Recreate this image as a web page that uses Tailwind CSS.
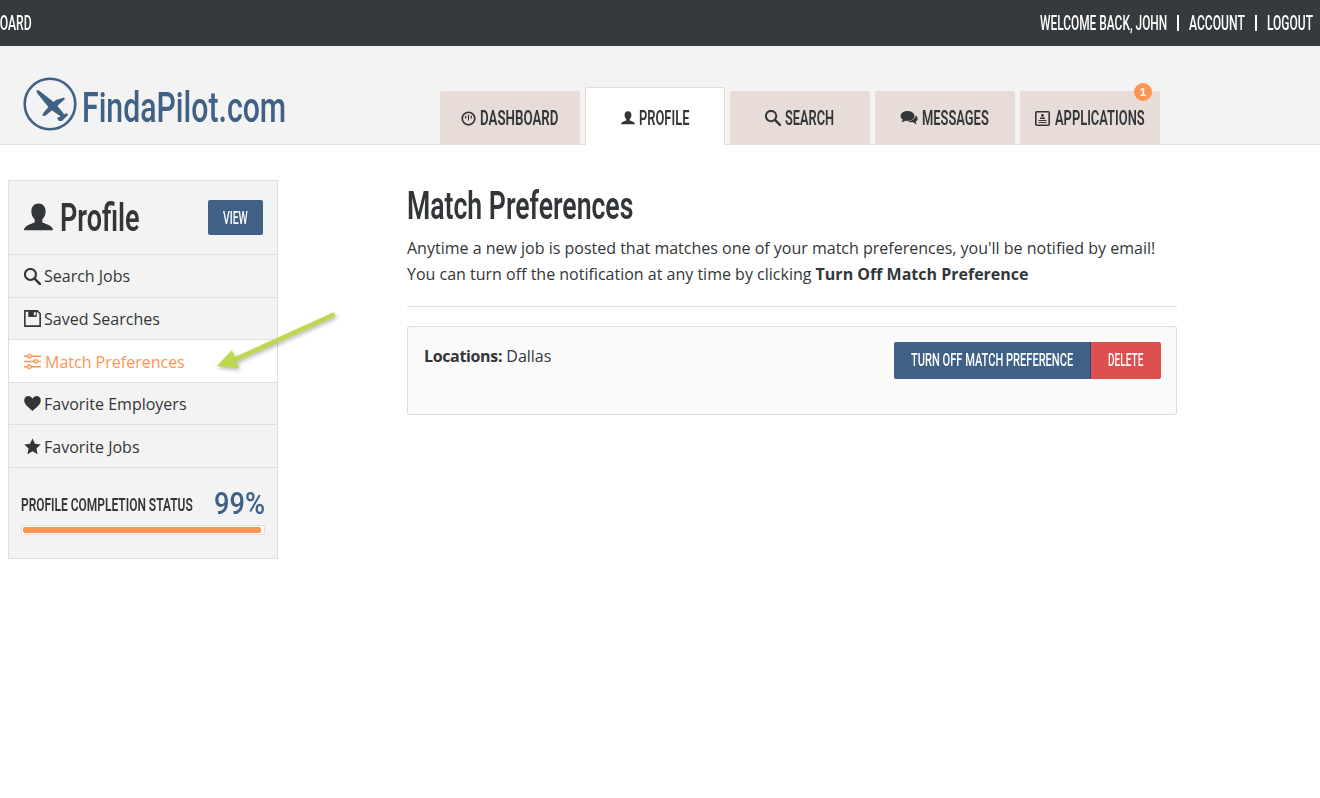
<!DOCTYPE html>
<html lang="en">
<head>
  <meta charset="UTF-8" />
  <title>FindaPilot.com - Match Preferences</title>
  <script src="https://cdn.jsdelivr.net/npm/@tailwindcss/browser@4"></script>
</head>
<body class="relative bg-white min-h-screen overflow-hidden font-['Open_Sans',sans-serif] text-[#333639]">
  <!-- top bar -->
  <div class="h-[46px] bg-[#363a3d] flex items-center justify-between pr-[7px] text-white text-[20px] leading-[24px] font-medium font-['Roboto',sans-serif]">
    <a class="ml-[-40px] w-[71px] inline-block whitespace-nowrap origin-left scale-x-[.61]">DASHBOARD</a>
    <div class="flex items-center">
      <a class="w-[127px] inline-block whitespace-nowrap origin-left scale-x-[.595]">WELCOME BACK, JOHN</a>
      <span class="w-[2px] h-[16px] bg-white mx-[10px]"></span>
      <a class="w-[56px] inline-block whitespace-nowrap origin-left scale-x-[.605]">ACCOUNT</a>
      <span class="w-[2px] h-[16px] bg-white mx-[10px]"></span>
      <a class="w-[46px] inline-block whitespace-nowrap origin-left scale-x-[.6]">LOGOUT</a>
    </div>
  </div>

  <!-- logo + tabs -->
  <div class="h-[99px] bg-[#f3f3f3] border-b border-[#e8dcd6] flex items-end">
    <div class="w-[440px] h-full flex items-start pt-[31px] pl-[23px]">
      <svg class="w-[55px] h-[55px] shrink-0" viewBox="0 0 55 55">
        <circle cx="27" cy="27" r="25.300" fill="none" stroke="#3f6186" stroke-width="2.600"/>
        <path fill="#3f6186" d="M13.500 13L16 13.500L32 26L41 37L40 40L37 39L27 32L14 16z"/>
        <path fill="#3f6186" d="M41 20.500L42 22L32 31L22 39L19 38.500L21 35L28 27L33 23z"/>
        <path fill="#3f6186" d="M34 41L44 36L45 38L43 40L39 44L36 44z"/>
      </svg>
      <span class="ml-[4px] mt-[8px] w-[203px] inline-block whitespace-nowrap origin-left scale-x-[.72] text-[#3f6186] text-[42px] leading-[46px] font-medium font-['Roboto',sans-serif]">FindaPilot.com</span>
    </div>
    <nav class="flex gap-[5px] items-end text-[20px] leading-[24px] font-semibold font-['Roboto',sans-serif]">
      <a class="w-[140px] h-[53px] pt-[1px] bg-[#e7dcd7] rounded-t-[2px] flex items-center justify-center gap-[4px]">
        <svg class="w-[15px] h-[15px]" viewBox="0 0 16 16"><circle cx="8" cy="8" r="6.700" fill="none" stroke="#333639" stroke-width="1.800"/><path fill="#333639" d="M7.300 4h1.400l-.2 6h-1zM4.300 5h1.200l.4 3H4.500zM10.500 5h1.200l-.2 3h-1.400z"/></svg>
        <span class="w-[79px] inline-block whitespace-nowrap origin-left scale-x-[.665]">DASHBOARD</span>
      </a>
      <a class="w-[140px] h-[58px] mb-[-1px] pt-[3px] bg-white border border-b-0 border-[#e8dcd6] rounded-t-[2px] flex items-center justify-center gap-[4px]">
        <svg class="w-[14px] h-[14px]" viewBox="1 1 13 12.500"><path fill="#333639" d="M7.500 1c2 0 3.200 1.500 3.200 3.500 0 1.500-.6 2.800-1.500 3.700v1.300c1.800.7 4.800 1.500 4.800 3.500H1c0-2 3-2.800 4.800-3.500V8.200C4.900 7.300 4.300 6 4.300 4.500 4.300 2.500 5.500 1 7.500 1z"/></svg>
        <span class="w-[50px] inline-block whitespace-nowrap origin-left scale-x-[.645]">PROFILE</span>
      </a>
      <a class="w-[140px] h-[53px] pt-[1px] bg-[#e7dcd7] rounded-t-[2px] flex items-center justify-center gap-[4px]">
        <svg class="w-[16px] h-[16px]" viewBox="1 1 14.500 14.500"><circle cx="6.500" cy="6.500" r="4.700" fill="none" stroke="#333639" stroke-width="1.800"/><path stroke="#333639" stroke-width="2.200" stroke-linecap="round" d="M10 10l4.500 4.500"/></svg>
        <span class="w-[50px] inline-block whitespace-nowrap origin-left scale-x-[.64]">SEARCH</span>
      </a>
      <a class="w-[140px] h-[53px] pt-[1px] bg-[#e7dcd7] rounded-t-[2px] flex items-center justify-center gap-[4px]">
        <svg class="w-[18px] h-[16px]" viewBox="0 0 18 16"><ellipse cx="7.500" cy="6" rx="7" ry="5" fill="#333639"/><path fill="#333639" d="M3 9l-1.500 3.500L6 10.500zM15.500 5.500c1.800 1 2.500 2.500 2 4-.3 1-1 1.700-1.800 2.200l.8 2.800-3.500-2.300c-2 .3-4-.2-5-1.200 3.500 0 7.500-2 7.500-5.500z"/></svg>
        <span class="w-[68px] inline-block whitespace-nowrap origin-left scale-x-[.645]">MESSAGES</span>
      </a>
      <a class="relative w-[140px] h-[53px] pt-[1px] bg-[#e7dcd7] rounded-t-[2px] flex items-center justify-center gap-[5px]">
        <svg class="w-[15px] h-[15px] shrink-0" viewBox="0 0 15 15"><rect x=".8" y=".8" width="13.400" height="13.400" rx="1" fill="none" stroke="#333639" stroke-width="1.600"/><circle cx="7.500" cy="4.500" r="1.400" fill="#333639"/><path fill="#333639" d="M5 6.500h5v1.500H5zM3.500 9h8v1h-8zM3.500 11h8v1h-8z"/></svg>
        <span class="w-[90px] inline-block whitespace-nowrap origin-left scale-x-[.645]">APPLICATIONS</span>
        <span class="absolute top-[-8px] right-[8px] w-[18px] h-[18px] rounded-full bg-[#fd9555] text-white text-[11px] font-bold leading-[18px] text-center font-['Liberation_Sans',sans-serif]">1</span>
      </a>
    </nav>
  </div>

  <!-- page body -->
  <div class="flex items-start pl-[8px] pt-[35px]">
    <aside class="w-[270px] shrink-0 bg-[#f3f3f3] border border-[#e8dcd6] h-[379px]">
      <div class="h-[73px] flex items-center justify-between pl-[15px] pr-[14px]">
        <h2 class="flex items-center gap-[7px] text-[38px] leading-[44px] font-semibold font-['Roboto',sans-serif]">
          <svg class="w-[29px] h-[29px]" viewBox="1 1 13 12.500"><path fill="#333639" d="M7.500 1c2 0 3.200 1.500 3.200 3.500 0 1.500-.6 2.800-1.500 3.700v1.300c1.800.7 4.800 1.500 4.800 3.500H1c0-2 3-2.800 4.800-3.500V8.200C4.900 7.300 4.300 6 4.300 4.500 4.300 2.500 5.500 1 7.500 1z"/></svg>
          <span class="w-[79px] inline-block whitespace-nowrap origin-left scale-x-[.71]">Profile</span>
        </h2>
        <a class="w-[55px] h-[35px] bg-[#3f6186] rounded-[2px] text-white text-[18px] leading-[22px] font-medium flex items-center justify-center font-['Roboto',sans-serif]"><span class="w-[26px] inline-block whitespace-nowrap origin-left scale-x-[.58]">VIEW</span></a>
      </div>
      <ul class="text-[16px] leading-[22px]">
        <li class="h-[43px] border-t border-[#e8dcd6] flex items-center gap-[3px] pl-[15px]">
          <svg class="w-[17px] h-[17px]" viewBox="1 1 14.500 14.500"><circle cx="6.500" cy="6.500" r="4.700" fill="none" stroke="#333639" stroke-width="1.800"/><path stroke="#333639" stroke-width="2.200" stroke-linecap="round" d="M10 10l4.500 4.500"/></svg>
          Search Jobs
        </li>
        <li class="h-[42px] border-t border-[#e8dcd6] flex items-center gap-[3px] pl-[15px]">
          <svg class="w-[17px] h-[17px]" viewBox="0 0 16 16"><path fill="none" stroke="#333639" stroke-width="1.500" d="M.8.800h11.700l2.700 2.700v11.700H.8z"/><path fill="#333639" d="M4 1h8v5.500H4z"/><path fill="#f3f3f3" d="M9.300 2h1.700v3H9.300z"/></svg>
          Saved Searches
        </li>
        <li class="h-[43px] pt-[1px] border-t border-[#e8dcd6] bg-white text-[#fd9555] flex items-center gap-[4px] pl-[15px]">
          <svg class="w-[17px] h-[17px]" viewBox="0 0 16 16" fill="none" stroke="#fd9555" stroke-width="1.300"><path d="M0 3h16M0 8h16M0 13h16"/><circle cx="5" cy="3" r="1.700" fill="#fff"/><circle cx="11" cy="8" r="1.700" fill="#fff"/><circle cx="5" cy="13" r="1.700" fill="#fff"/></svg>
          Match Preferences
        </li>
        <li class="h-[42px] border-t border-[#e8dcd6] flex items-center gap-[3px] pl-[15px]">
          <svg class="w-[17px] h-[17px]" viewBox="0 0 16 16"><path fill="#333639" d="M8 15C4 11.500.2 9 .2 5 .2 2.500 2 1 4 1c1.800 0 3.200 1 4 2.500C8.800 2 10.200 1 12 1c2 0 3.800 1.500 3.800 4 0 4-3.800 6.500-7.800 10z"/></svg>
          Favorite Employers
        </li>
        <li class="h-[44px] pt-[1px] border-y border-[#e8dcd6] flex items-center gap-[3px] pl-[15px]">
          <svg class="w-[17px] h-[17px]" viewBox="0 0 16 16"><path fill="#333639" d="M8 .5l2.300 5 5.400.6-4 3.700 1.100 5.400L8 12.500l-4.800 2.700 1.100-5.400-4-3.700 5.400-.6z"/></svg>
          Favorite Jobs
        </li>
      </ul>
      <div class="px-[12px] pt-[15px]">
        <div class="flex items-center justify-between h-[42px]">
          <span class="mt-[2px] w-[173px] inline-block whitespace-nowrap origin-left scale-x-[.63] text-[19px] leading-[24px] font-semibold font-['Roboto',sans-serif]">PROFILE COMPLETION STATUS</span>
          <span class="mt-[-3px] w-[51px] inline-block whitespace-nowrap origin-left scale-x-[.85] text-[#3f6186] text-[32px] leading-[36px] font-medium font-['Roboto',sans-serif]">99%</span>
        </div>
        <div class="h-[10px] bg-white border border-[#e8dcd6] rounded-[2px] p-[1px]">
          <div class="h-full bg-[#fd9555] rounded-[2px]" style="width: 99%"></div>
        </div>
      </div>
    </aside>

    <main class="w-[770px] ml-[129px] shrink-0">
      <h1 class="mt-[1px] w-[226px] whitespace-nowrap origin-left scale-x-[.7] text-[38px] leading-[50px] font-semibold font-['Roboto',sans-serif]">Match Preferences</h1>
      <p class="mt-[4px] text-[16px] leading-[26px]">Anytime a new job is posted that matches one of your match preferences, you'll be notified by email!<br>You can turn off the notification at any time by clicking <strong>Turn Off Match Preference</strong></p>
      <hr class="mt-[19px] border-[#e0dcd9]">
      <div class="mt-[19px] h-[89px] bg-[#fbfafa] border border-[#e8dcd6] rounded-[2px] flex items-start justify-between pt-[15px] pl-[16px] pr-[15px]">
        <p class="mt-[1px] text-[16px] leading-[26px]"><strong class="tracking-[-0.35px]">Locations:</strong> Dallas</p>
        <div class="flex text-white text-[18px] leading-[22px] font-medium font-['Roboto',sans-serif]">
          <a class="w-[197px] h-[37px] bg-[#3f6186] border-r border-[#2e4963] rounded-l-[2px] flex items-center justify-center"><span class="mt-[-1px] w-[163px] inline-block whitespace-nowrap origin-left scale-x-[.615]">TURN OFF MATCH PREFERENCE</span></a>
          <a class="w-[70px] h-[37px] bg-[#de5050] rounded-r-[2px] flex items-center justify-center"><span class="mt-[-1px] w-[36px] inline-block whitespace-nowrap origin-left scale-x-[.56]">DELETE</span></a>
        </div>
      </div>
    </main>
  </div>

  <!-- annotation arrow -->
  <svg class="absolute left-[210px] top-[305px] w-[130px] h-[75px] drop-shadow-[1px_2px_2px_rgba(0,0,0,0.3)]" viewBox="0 0 130 75">
    <path d="M123 10L26 54" stroke="#bdd84d" stroke-width="4.500" stroke-linecap="round"/>
    <path fill="#bdd84d" d="M7 61L22 45L29 63z"/>
  </svg>
</body>
</html>
